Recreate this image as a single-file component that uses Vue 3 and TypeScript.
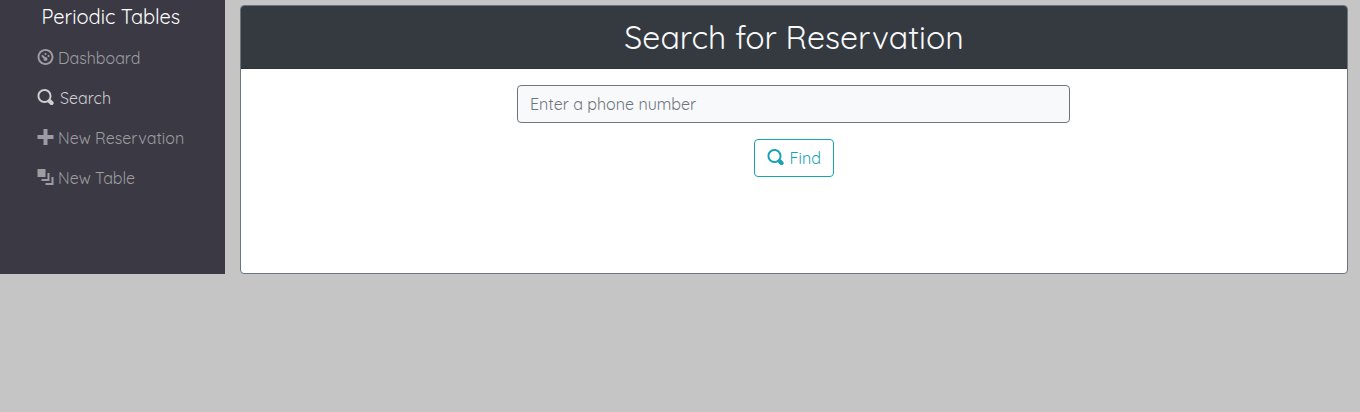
<script setup lang="ts">
interface NavItem {
  label: string
  icon: string
  key: string
  active?: boolean
}

const searchIcon =
  'M3.5 0c-1.93 0-3.5 1.57-3.5 3.5s1.57 3.5 3.5 3.5c.59 0 1.17-.14 1.66-.41a1 1 0 0 0 .13.13l1 1a1.02 1.02 0 1 0 1.44-1.44l-1-1a1 1 0 0 0-.16-.13c.27-.49.44-1.06.44-1.66 0-1.93-1.55-3.5-3.5-3.5zm0 1c1.39 0 2.5 1.11 2.5 2.5 0 .66-.24 1.27-.66 1.72l-.03.03a1 1 0 0 0-.13.13c-.44.4-1.04.63-1.69.63-1.39 0-2.5-1.11-2.5-2.5s1.11-2.5 2.5-2.5z'

const items: NavItem[] = [
  {
    label: 'Dashboard',
    key: 'dashboard',
    icon: 'M4 0c-2.2 0-4 1.8-4 4s1.8 4 4 4 4-1.8 4-4-1.8-4-4-4zm0 1c1.66 0 3 1.34 3 3s-1.34 3-3 3-3-1.34-3-3 1.34-3 3-3zm0 1c-.28 0-.5.22-.5.5s.22.5.5.5.5-.22.5-.5-.22-.5-.5-.5zm-1.66 1a.5.5 0 0 0-.19.84l.91.91c-.02.08-.06.16-.06.25 0 .55.45 1 1 1s1-.45 1-1-.45-1-1-1c-.09 0-.17.04-.25.06l-.91-.91a.5.5 0 0 0-.5-.15zm3.16 0c-.28 0-.5.22-.5.5s.22.5.5.5.5-.22.5-.5-.22-.5-.5-.5z',
  },
  { label: 'Search', key: 'search', icon: searchIcon, active: true },
  { label: 'New Reservation', key: 'reservation', icon: 'M3 0v3h-3v2h3v3h2v-3h3v-2h-3v-3h-2z' },
  {
    label: 'New Table',
    key: 'table',
    icon: 'M0 0v4h4v-4h-4zm5 2v3h-3v1h4v-4h-1zm2 2v3h-3v1h4v-4h-1z',
  },
]
</script>

<template>
  <div class="layout">
    <nav class="sidebar">
      <a class="brand"><span>Periodic Tables</span></a>
      <ul class="menu">
        <li v-for="item in items" :key="item.key">
          <a class="link" :class="[item.key, { active: item.active }]">
            <svg class="icon" viewBox="0 0 8 8"><path :d="item.icon" /></svg>
            <span>{{ item.label }}</span>
          </a>
        </li>
      </ul>
    </nav>
    <main class="content">
      <section class="card">
        <header class="card-header"><h2>Search for Reservation</h2></header>
        <form class="card-body" @submit.prevent>
          <input class="field" type="text" placeholder="Enter a phone number" />
          <button class="find" type="submit">
            <svg class="icon" viewBox="0 0 8 8"><path :d="searchIcon" /></svg>
            <span>Find</span>
          </button>
        </form>
      </section>
    </main>
  </div>
</template>

<style>
body {
  margin: 0;
  background: #c5c5c5;
}
</style>

<style scoped>
.layout,
.field,
.find {
  font-family: Quicksand, Inter, 'Liberation Sans', sans-serif;
  font-weight: 400;
}
.layout {
  display: flex;
  height: 274px;
  font-size: 16px;
  line-height: 24px;
}
.sidebar {
  width: 225px;
  background: #3b3a44;
  flex: none;
}
.brand {
  display: block;
  padding-left: 41.5px;
  height: 38px;
  line-height: 34px;
  font-size: 20px;
  color: #fff;
  white-space: nowrap;
}
.menu {
  list-style: none;
  margin: 0;
  padding: 0 0 0 37px;
}
.link {
  display: flex;
  align-items: center;
  height: 40px;
  color: #9d9ca1;
  gap: 4px;
  white-space: nowrap;
}
.link.active {
  color: #cecdd0;
  gap: 6px;
}
.icon {
  width: 17px;
  height: 16px;
  flex: none;
  fill: currentColor;
  margin-top: -2px;
}
.content {
  flex: 1;
  padding: 5px 12px 0 15px;
  display: flex;
}
.card {
  flex: 1;
  box-sizing: border-box;
  border: 1px solid #6c757d;
  border-radius: 4px;
  background: #fff;
  overflow: hidden;
}
.card-header {
  height: 63px;
  box-sizing: border-box;
  background: #343a40;
  border-bottom: 1px solid #2d3238;
  text-align: center;
}
.card-header h2 {
  margin: 0;
  font-size: 32px;
  line-height: 62px;
  font-weight: 400;
  color: #f8f9fa;
}
.card-body {
  display: flex;
  flex-direction: column;
  align-items: center;
  gap: 16px;
  padding: 16px 1px 0 0;
}
.field {
  width: 553px;
  height: 38px;
  box-sizing: border-box;
  border: 1px solid #6c757d;
  border-radius: 4px;
  background: #f8f9fa;
  padding: 0 12px;
  font-size: 16px;
  color: #495057;
  outline: none;
}
.field::placeholder {
  color: #6c757d;
  opacity: 1;
}
.find {
  width: 80px;
  height: 38px;
  box-sizing: border-box;
  border: 1px solid #17a2b8;
  border-radius: 4px;
  background: transparent;
  color: #17a2b8;
  padding: 0 12px;
  display: flex;
  align-items: center;
  gap: 6px;
  font-size: 16px;
}
</style>
